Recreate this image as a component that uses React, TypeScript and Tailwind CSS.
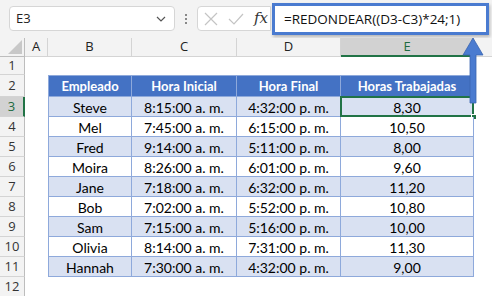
import React from "react";

const rows = [
  { name: "Steve", start: "8:15:00 a. m.", end: "4:32:00 p. m.", hours: "8,30" },
  { name: "Mel", start: "7:45:00 a. m.", end: "6:15:00 p. m.", hours: "10,50" },
  { name: "Fred", start: "9:14:00 a. m.", end: "5:11:00 p. m.", hours: "8,00" },
  { name: "Moira", start: "8:26:00 a. m.", end: "6:01:00 p. m.", hours: "9,60" },
  { name: "Jane", start: "7:18:00 a. m.", end: "6:32:00 p. m.", hours: "11,20" },
  { name: "Bob", start: "7:02:00 a. m.", end: "5:52:00 p. m.", hours: "10,80" },
  { name: "Sam", start: "7:15:00 a. m.", end: "5:16:00 p. m.", hours: "10,00" },
  { name: "Olivia", start: "8:14:00 a. m.", end: "7:31:00 p. m.", hours: "11,30" },
  { name: "Hannah", start: "7:30:00 a. m.", end: "4:32:00 p. m.", hours: "9,00" },
];

const cols = "grid-cols-[25px_23px_84px_105px_104px_133px_1fr]";
const uiFont = "font-['Open_Sans',sans-serif]";
const cellFont = "font-['Lato',sans-serif]";

function RowHead({ n, active }: { n: number; active?: boolean }) {
  return (
    <div
      className={`flex items-center justify-center border-b border-[#d4d4d4] text-[13px] ${uiFont} ${
        active
          ? "bg-[#d2d2d2] text-[#1e6b41] border-r-2 border-r-[#217346]"
          : "bg-[#f3f3f3] text-[#333] border-r border-r-[#bdbdbd]"
      }`}
    >
      {n}
    </div>
  );
}

export default function App() {
  return (
    <div className="relative w-[492px] h-[296px] overflow-hidden bg-white">
      {/* formula bar */}
      <div className="h-[38px] bg-[#f3f3f3] flex items-start pt-[6px]">
        <div
          className={`ml-[9px] w-[166px] h-[25px] bg-white border border-[#d6d6d6] rounded-[4px] flex items-center justify-between pl-[6px] pr-[8px] text-[13px] text-[#222] ${uiFont}`}
        >
          <span>E3</span>
          <svg width="10" height="6" viewBox="0 0 10 6">
            <path d="M1 1l4 4 4-4" fill="none" stroke="#555" strokeWidth="1.2" />
          </svg>
        </div>
        <div className="w-[22px] h-[25px] flex flex-col items-center justify-center gap-[2px]">
          <span className="w-[2px] h-[2px] bg-[#888]" />
          <span className="w-[2px] h-[2px] bg-[#888]" />
          <span className="w-[2px] h-[2px] bg-[#888]" />
        </div>
        <div className="w-[74px] h-[25px] bg-white border border-[#d6d6d6] rounded-l-[4px] flex items-center pl-[6px] gap-[10px]">
          <svg width="14" height="14" viewBox="0 0 14 14">
            <path d="M1 1l12 12M13 1L1 13" stroke="#c4c4c4" strokeWidth="1.2" />
          </svg>
          <svg width="16" height="12" viewBox="0 0 16 12">
            <path d="M1 6l5 5L15 1" fill="none" stroke="#c4c4c4" strokeWidth="1.2" />
          </svg>
          <span className="font-['DejaVu_Serif',serif] italic text-[15px] text-[#333] leading-none">
            fx
          </span>
        </div>
        <div className="-mt-[3px] ml-[1px] w-[217px] h-[32px] bg-white border-[3px] border-[#4a7bd0] shadow-[1px_2px_3px_rgba(0,0,0,0.25)] flex items-center pl-[9px]">
          <span className={`text-[13.5px] text-[#111] ${uiFont}`}>=REDONDEAR((D3-C3)*24;1)</span>
        </div>
      </div>

      {/* sheet */}
      <div className={`grid ${cols} grid-rows-[19px_18px_22px_repeat(9,20px)_1fr] h-[258px]`}>
        {/* column headers */}
        <div className="bg-[#f3f3f3] border-r border-b border-[#bdbdbd] flex items-end justify-end p-[2px]">
          <svg width="14" height="14" viewBox="0 0 14 14">
            <path d="M14 0L14 14L0 14Z" fill="#c8c8c8" />
          </svg>
        </div>
        {["A", "B", "C", "D"].map((c) => (
          <div
            key={c}
            className={`bg-[#f3f3f3] border-r border-b border-[#d4d4d4] flex items-center justify-center text-[13px] text-[#222] ${uiFont}`}
          >
            {c}
          </div>
        ))}
        <div
          className={`bg-[#d2d2d2] border-r border-[#c4c4c4] border-b-2 border-b-[#217346] flex items-center justify-center text-[13px] text-[#1e6b41] ${uiFont}`}
        >
          E
        </div>
        <div className="bg-[#f3f3f3] border-b border-[#d4d4d4]" />

        {/* row 1 */}
        <RowHead n={1} />
        <div className="col-span-6" />

        {/* row 2: table header */}
        <RowHead n={2} />
        <div />
        {["Empleado", "Hora Inicial", "Hora Final", "Horas Trabajadas"].map((h, i) => (
          <div
            key={h}
            className={`bg-[#4472c4] text-white font-bold text-[13px] ${cellFont} flex items-center justify-center pt-[1px] border-t border-b border-r border-[#8ea9db] ${
              i === 0 ? "border-l" : ""
            }`}
          >
            {h}
          </div>
        ))}
        <div />

        {rows.map((r, idx) => {
          const stripe = idx % 2 === 0 ? "bg-[#d9e1f2]" : "bg-white";
          const cell = `${stripe} ${cellFont} text-[14px] text-black flex items-center justify-center pt-[1px] border-b border-r border-[#8ea9db]`;
          return (
            <React.Fragment key={r.name}>
              <RowHead n={idx + 3} active={idx === 0} />
              <div />
              <div className={`${cell} border-l`}>{r.name}</div>
              <div className={cell}>{r.start}</div>
              <div className={cell}>{r.end}</div>
              <div className={`${cell} relative`}>
                {r.hours}
                {idx === 0 && (
                  <>
                    <span className="absolute -left-[1px] -top-[1px] -right-[1px] -bottom-[1px] border-2 border-[#217346]" />
                    <span className="absolute -right-[4px] -bottom-[4px] w-[6px] h-[6px] bg-[#217346] border border-white" />
                  </>
                )}
              </div>
              <div />
            </React.Fragment>
          );
        })}

        {/* row 12 */}
        <RowHead n={12} />
        <div className="col-span-6" />
      </div>

      {/* callout arrow */}
      <svg
        className="absolute left-[461px] top-[36px]"
        width="24"
        height="70"
        viewBox="0 0 24 70"
      >
        <path
          d="M12 2L22 19H15V67H9V19H2Z"
          fill="#4a7bd0"
          stroke="#3a64b0"
          strokeWidth="0.8"
        />
      </svg>
    </div>
  );
}
